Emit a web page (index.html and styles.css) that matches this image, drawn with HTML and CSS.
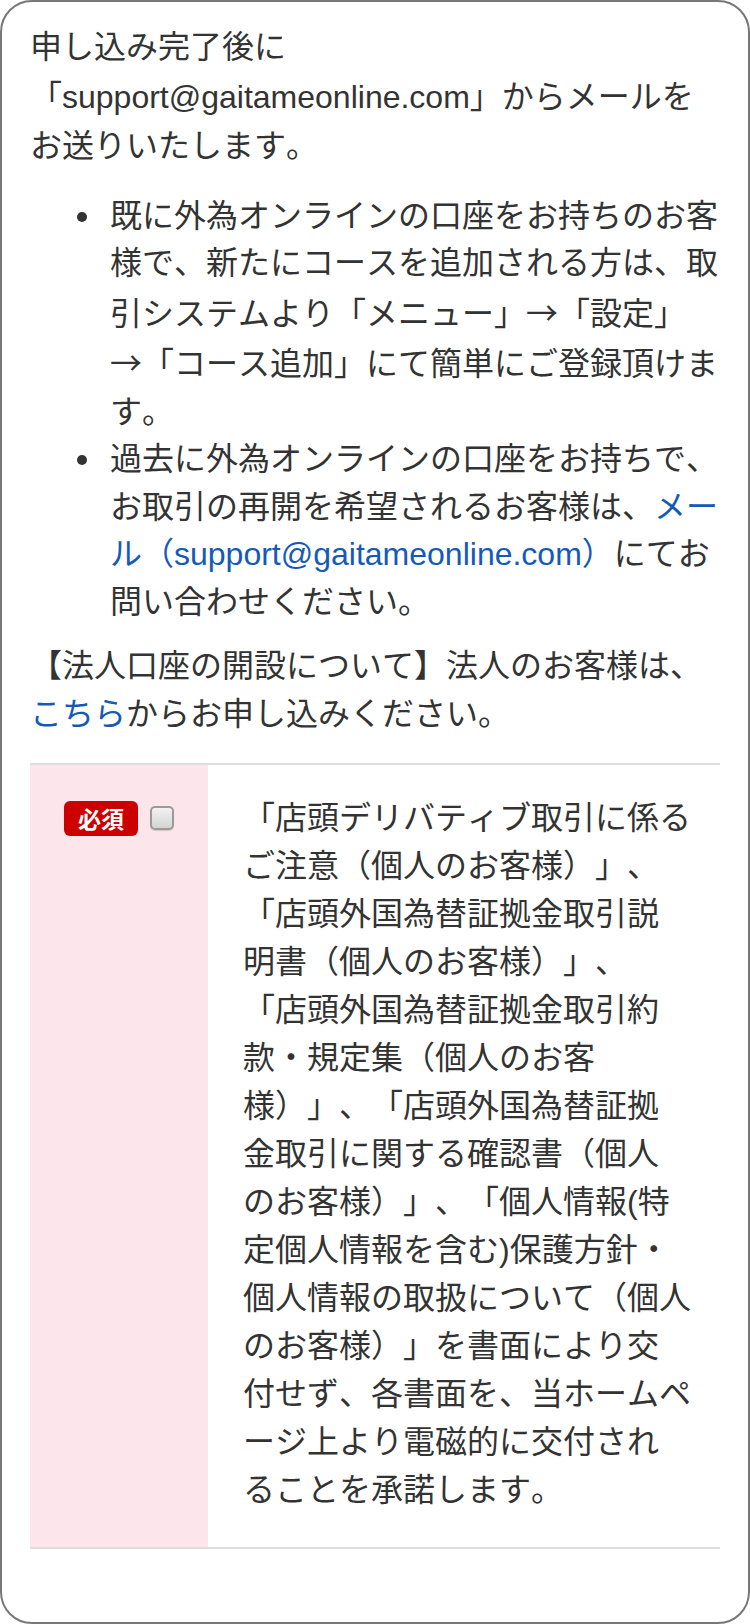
FILE: index.html
```html
<!DOCTYPE html>
<html lang="ja">
<head>
<meta charset="utf-8">
<title>申し込み</title>
<link rel="stylesheet" href="styles.css">
</head>
<body>
<div class="frame">
  <p class="intro">申し込み完了後に<br>「support@gaitameonline.com」からメールをお送りいたします。</p>
  <ul class="notes">
    <li>既に外為オンラインの口座をお持ちのお客様で、新たにコースを追加される方は、取引システムより「メニュー」<span class="arrow">→</span>「設定」<span class="nw"><span class="arrow">→</span>「コース</span>追加」にて簡単にご登録頂けます。</li>
    <li>過去に外為オンラインの口座をお持ちで、お取引の再開を希望されるお客様は、<a href="#" class="link">メール（support@gaitameonline.com）</a>にてお問い合わせください。</li>
  </ul>
  <p class="corp">【法人口座の開設について】法人のお客様は、<a href="#" class="link">こちら</a>からお申し込みください。</p>
  <div class="agree">
    <div class="agree-head">
      <div class="agree-ctrl">
        <span class="badge">必須</span>
        <input type="checkbox" class="check" aria-label="同意">
      </div>
    </div>
    <div class="agree-body">
      「店頭デリバティブ取引に係る<br>ご注意（個人のお客様）」、<br>「店頭外国為替証拠金取引説<br>明書（個人のお客様）」、<br>「店頭外国為替証拠金取引約<br>款・規定集（個人のお客<br>様）」、「店頭外国為替証拠<br>金取引に関する確認書（個人<br>のお客様）」、「個人情報(特<br>定個人情報を含む)保護方針・<br>個人情報の取扱について（個人<br>のお客様）」を書面により交<br>付せず、各書面を、当ホームペ<br>ージ上より電磁的に交付され<br>ることを承諾します。
    </div>
  </div>
</div>
</body>
</html>
```

FILE: styles.css
```css
html, body {
  margin: 0;
  padding: 0;
  background: #ffffff;
}

body {
  font-family: "Liberation Sans", "Noto Sans CJK JP", sans-serif;
  font-size: 32px;
  line-height: 48px;
  color: #333333;
  text-spacing-trim: space-all;
  font-kerning: none;
}

.frame {
  box-sizing: border-box;
  height: 1624px;
  border: 2px solid #777777;
  border-radius: 32px;
  padding: 21px 28px 0;
  background: #ffffff;
}

.intro {
  margin: 0;
  line-height: 49.5px;
}

.notes {
  list-style: none;
  margin: 21px 0 0;
  padding: 0 0 0 80px;
  line-height: 47.5px;
}

.notes li {
  position: relative;
}

.notes li::before {
  content: "";
  position: absolute;
  left: -33px;
  top: 19px;
  width: 10px;
  height: 10px;
  border-radius: 50%;
  background: #333333;
}

.arrow {
  font-family: "Noto Sans CJK JP", sans-serif;
}

.nw {
  white-space: nowrap;
}

.link {
  color: #155ab6;
  text-decoration: none;
}

.corp {
  margin: 16px 0 0;
}

.agree {
  margin-top: 25px;
  display: grid;
  grid-template-columns: 178px 1fr;
  border-top: 2px solid #dddddd;
  border-bottom: 2px solid #dddddd;
}

.agree-head {
  background: #fce5eb;
  padding-top: 29px;
}

.agree-ctrl {
  height: 48px;
  display: flex;
  align-items: center;
  justify-content: center;
  gap: 12px;
}

.badge {
  display: inline-block;
  background: #cc0000;
  color: #ffffff;
  font-family: "Noto Sans CJK JP", sans-serif;
  font-weight: 700;
  font-size: 23px;
  line-height: 35px;
  height: 35px;
  padding: 0 14px;
  border-radius: 6px;
}

.check {
  -webkit-appearance: none;
  appearance: none;
  box-sizing: border-box;
  margin: 0;
  width: 24px;
  height: 24px;
  border: 2px solid #9a9a9a;
  border-radius: 5px;
  background: linear-gradient(#f2f2f2, #d4d4d4);
  box-shadow: 0 1px 1px rgba(0, 0, 0, 0.15);
}

.agree-body {
  padding: 29px 24px 33px 35px;
}
```
